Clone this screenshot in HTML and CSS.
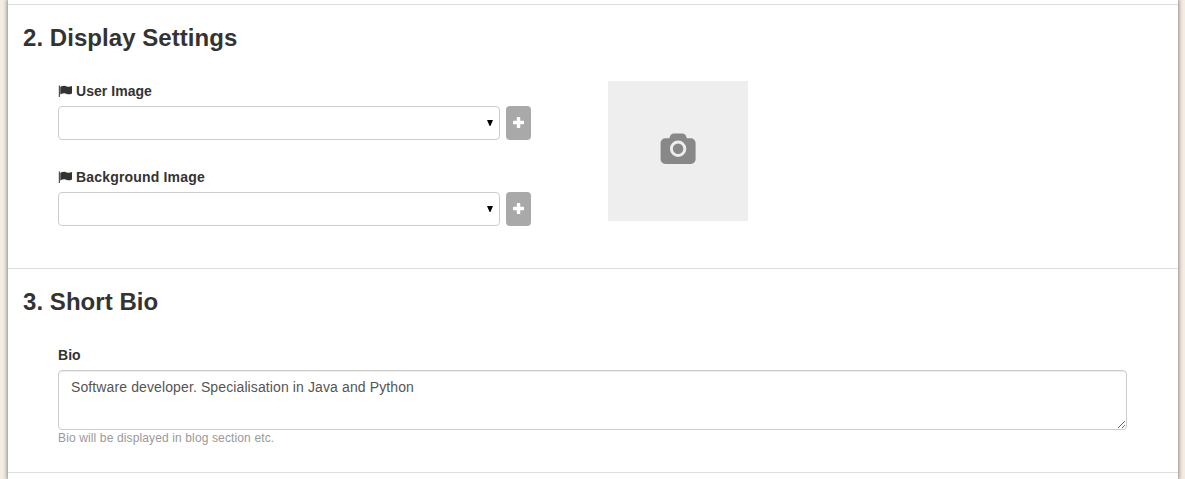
FILE: index.html
```html
<!DOCTYPE html>
<html lang="en">
<head>
<meta charset="utf-8">
<title>Profile settings</title>
<link rel="stylesheet" href="styles.css">
</head>
<body>
<main class="panel">
  <section class="section display">
    <h2 class="heading">2. Display Settings</h2>
    <div class="row">
      <div class="fields">
        <div class="field">
          <div class="label"><svg class="flag" viewBox="0 0 14 14"><path class="pole" d="M.8 1.500h1.200v11.500H.8z"/><path d="M2.300 2.800Q6 .9 8.300 2.200q2.300 1.200 5.700-.3v7.500q-3.200 1.700-5.700.4-2.500-1.200-6 .8z"/></svg>User Image</div>
          <div class="control">
            <div class="select"><svg class="arrow" viewBox="0 0 6 6"><path d="M0 0h6L3.4 6h-.8z"/></svg></div>
            <button class="add" aria-label="Add"><svg class="plus" viewBox="0 0 11 11"><path d="M4.4 0h2.2q.6 0 .6.6v3.2h3.2q.6 0 .6.6v2.2q0 .6-.6.6H7.2v3.2q0 .6-.6.6H4.4q-.6 0-.6-.6V7.2H.6Q0 7.2 0 6.600V4.400q0-.6.6-.6h3.200V.6q0-.6.6-.6z"/></svg></button>
          </div>
        </div>
        <div class="field">
          <div class="label wide"><svg class="flag" viewBox="0 0 14 14"><path class="pole" d="M.8 1.500h1.200v11.500H.8z"/><path d="M2.300 2.800Q6 .9 8.300 2.200q2.300 1.200 5.700-.3v7.500q-3.200 1.700-5.700.4-2.500-1.200-6 .8z"/></svg>Background Image</div>
          <div class="control">
            <div class="select"><svg class="arrow" viewBox="0 0 6 6"><path d="M0 0h6L3.4 6h-.8z"/></svg></div>
            <button class="add" aria-label="Add"><svg class="plus" viewBox="0 0 11 11"><path d="M4.4 0h2.2q.6 0 .6.6v3.2h3.2q.6 0 .6.6v2.2q0 .6-.6.6H7.2v3.2q0 .6-.6.6H4.4q-.6 0-.6-.6V7.2H.6Q0 7.2 0 6.600V4.400q0-.6.6-.6h3.200V.6q0-.6.6-.6z"/></svg></button>
          </div>
        </div>
      </div>
      <div class="preview"><svg class="camera" viewBox="-33 -33 1975 1701"><path d="M960 544q119 0 203.500 84.500t84.500 203.500-84.500 203.500-203.500 84.500-203.500-84.500-84.500-203.500 84.500-203.500 203.500-84.500zm704-288q106 0 181 75t75 181v896q0 106-75 181t-181 75H256q-106 0-181-75T0 1408V512q0-106 75-181t181-75h224l51-136q19-49 69.500-84.500T704 0h512q53 0 103.500 35.500T1389 120l51 136h224zM960 1280q185 0 316.500-131.500T1408 832t-131.500-316.500T960 384 643.500 515.500 512 832t131.500 316.500T960 1280z"/></svg></div>
    </div>
  </section>
  <section class="section bio">
    <h2 class="heading">3. Short Bio</h2>
    <div class="biofield">
      <label class="label" for="bio">Bio</label>
      <textarea class="text" id="bio">Software developer. Specialisation in Java and Python</textarea>
      <p class="help">Bio will be displayed in blog section etc.</p>
    </div>
  </section>
  <div class="section"></div>
</main>
</body>
</html>
```
FILE: styles.css
```css
* { box-sizing: border-box; }
body {
  margin: 0;
  height: 479px;
  overflow: hidden;
  background: #f5ede4;
  color: #333;
  font: 14px/20px "Liberation Sans", Arial, sans-serif;
}
.panel {
  height: 479px;
  margin: 0 7px 0 8px;
  padding-top: 4px;
  background: #fff;
  box-shadow: 0 0 4px 1px #888;
  clip-path: inset(0 -8px);
}
.section { border-top: 1px solid #ddd; }
.display { height: 264px; }
.bio { height: 204px; }
.heading {
  margin: 0;
  padding: 20px 15px 0;
  height: 76px;
  font-size: 24px;
  line-height: 26px;
  letter-spacing: .05px;
}
.row {
  display: flex;
  gap: 77px;
  padding-left: 50px;
}
.fields {
  display: flex;
  flex-direction: column;
  gap: 27px;
}
.label {
  display: flex;
  align-items: center;
  height: 20px;
  margin-bottom: 5px;
  font-weight: bold;
  letter-spacing: .04px;
}
.wide { letter-spacing: .18px; }
.flag {
  width: 14px;
  height: 14px;
  margin-right: 4px;
  fill: #333;
}
.pole { fill: #553; }
.control { display: flex; gap: 6px; }
.select {
  display: flex;
  align-items: center;
  justify-content: flex-end;
  width: 442px;
  height: 34px;
  padding-right: 6px;
  border: 1px solid #ccc;
  border-radius: 4px;
}
.arrow { width: 6px; height: 6px; }
.add {
  display: flex;
  align-items: center;
  justify-content: center;
  width: 25px;
  height: 34px;
  padding: 0 0 1px;
  border: 0;
  border-radius: 4px;
  background: #a9a9a9;
}
.plus { width: 11px; height: 11px; fill: #fff; }
.preview {
  display: flex;
  align-items: center;
  justify-content: center;
  width: 140px;
  height: 140px;
  background: #eee;
}
.camera { width: 36px; height: 31px; margin-top: -5px; fill: #888; }
.biofield { padding: 0 51px 0 50px; }
.text {
  display: block;
  width: 100%;
  height: 60px;
  margin: 0;
  padding: 6px 12px;
  border: 1px solid #ccc;
  border-radius: 4px;
  background: #fff;
  box-shadow: inset 0 1px 1px rgba(0, 0, 0, .075);
  color: #555;
  font: inherit;
  letter-spacing: .113px;
}
.help {
  margin: 0;
  color: #999;
  font-size: 12px;
  line-height: 16px;
  letter-spacing: .13px;
}
```
